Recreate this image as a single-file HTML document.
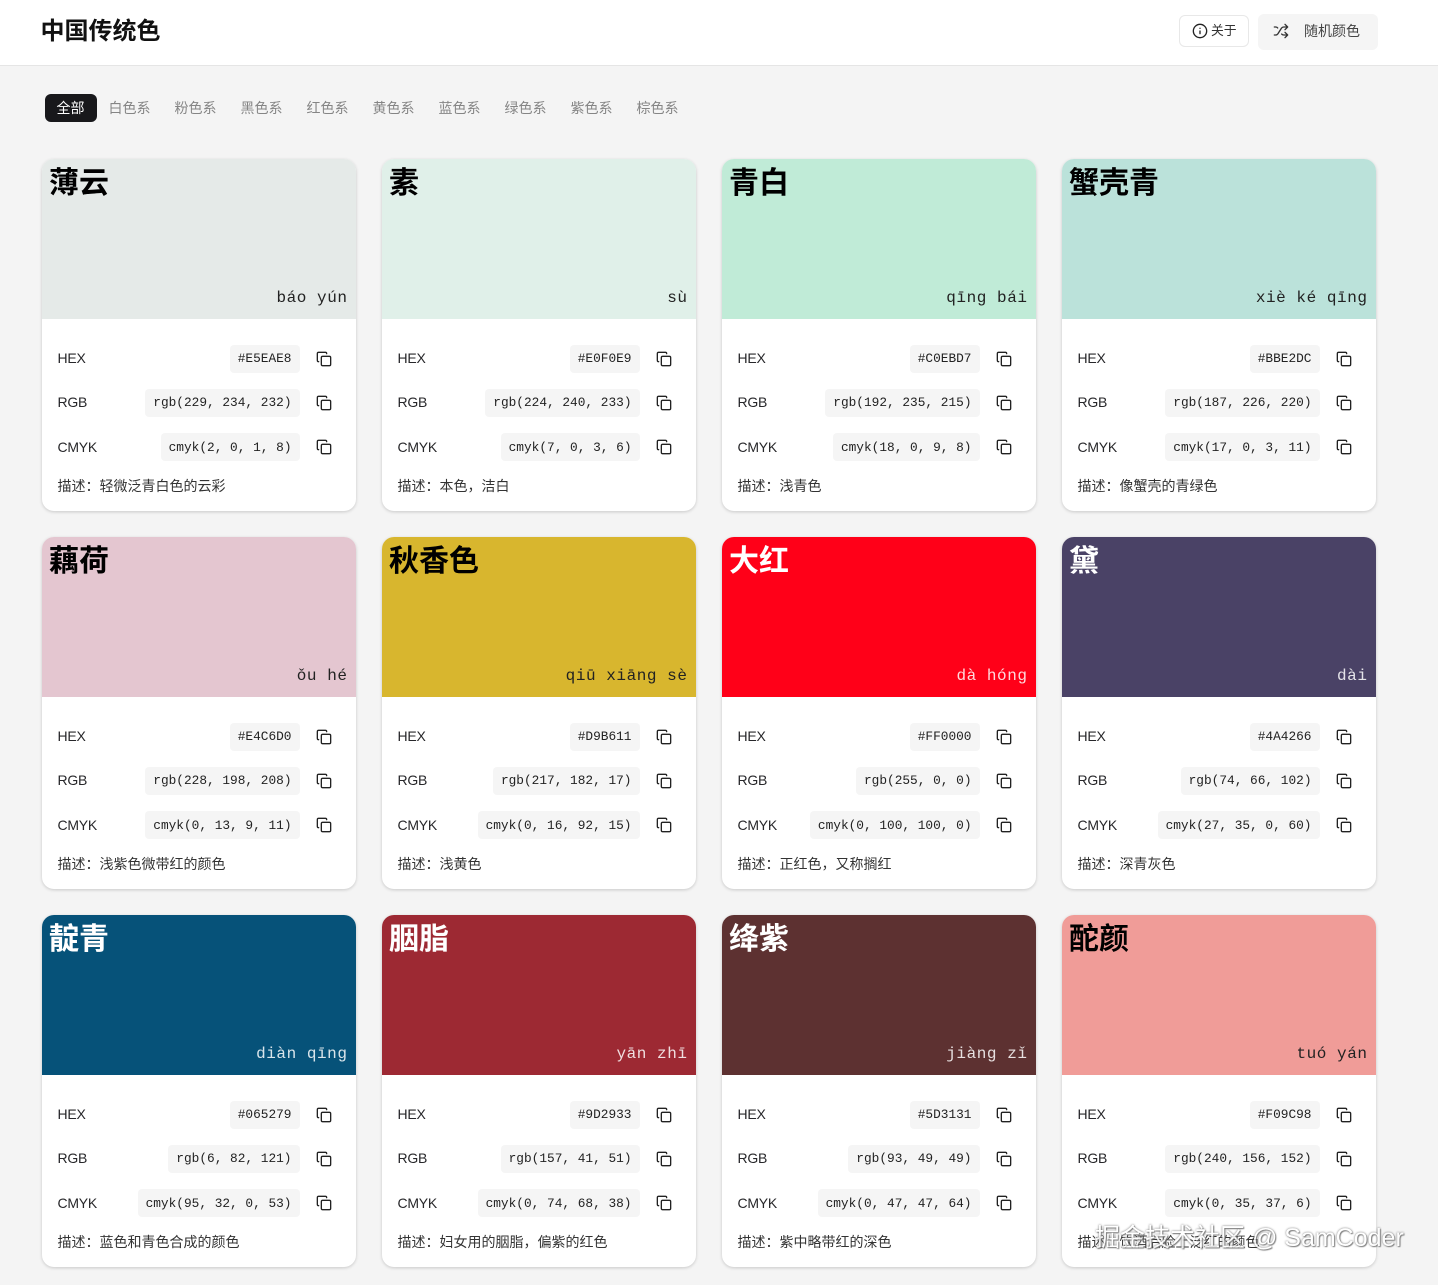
<!DOCTYPE html>
<html lang="zh"><head><meta charset="utf-8"><title>中国传统色</title>
<style>
*{box-sizing:border-box}
html,body{margin:0;padding:0}
body{width:1438px;height:1285px;position:relative;overflow:hidden;background:#f4f4f4;font-family:"Liberation Sans","Noto Sans CJK SC",sans-serif;color:#18181b}
header{position:absolute;left:0;top:0;width:1438px;height:66px;background:#fff;border-bottom:1px solid #e5e5e5}
h1{position:absolute;left:40.5px;top:14px;margin:0;font-size:24px;line-height:36px;font-weight:700;color:#111}
.about{position:absolute;left:1179px;top:15px;width:70px;height:32px;border:1px solid #e8e8e8;border-radius:6px;background:#fff;font-size:12.8px;line-height:30px;color:#333;padding-left:31px}
.about svg{position:absolute;left:12px;top:7px}
.rand{position:absolute;left:1258px;top:14px;width:120px;height:36px;border-radius:6px;background:#f5f5f5;font-size:14px;line-height:34px;color:#444;padding-left:46px}
.rand svg{position:absolute;left:15px;top:9px}
nav{position:absolute;left:44.5px;top:94px;display:flex;height:28px;font-size:14px;line-height:28px;color:#858585}
nav span{padding:0 12px;white-space:nowrap}
nav .on{background:#18181b;color:#fff;border-radius:6px;font-size:14px}
.c{position:absolute;width:314px;height:352px;background:#fff;border-radius:12px;overflow:hidden;box-shadow:0 1px 3px rgba(0,0,0,.18)}
.b{position:absolute;left:0;top:0;width:314px;height:160px}
.n{position:absolute;left:7px;top:2px;font-size:30px;line-height:45px;font-weight:700;color:#000;white-space:nowrap}
.p{position:absolute;right:8.5px;top:128px;font-family:"Liberation Mono","DejaVu Sans Mono",monospace;font-size:16px;letter-spacing:.55px;line-height:22px;color:#222;white-space:pre}
.w .n{color:#fff}.w .p{color:rgba(255,255,255,.85)}
.l{position:absolute;left:15.5px;font-size:14px;line-height:20px;color:#27272a;letter-spacing:-.25px}
.v{position:absolute;right:56px;height:28px;padding:0 8.5px 0 8px;background:#f5f5f5;border-radius:4px;font-family:"Liberation Mono","DejaVu Sans Mono",monospace;font-size:12.8px;line-height:28px;color:#222;white-space:pre}
.i{position:absolute;left:274px;width:16px;height:16px}
.r1.l{top:189px}.r2.l{top:233px}.r3.l{top:278px}
.r1.v{top:186px}.r2.v{top:230px}.r3.v{top:274px;line-height:30px}
.r1.i{top:192px}.r2.i{top:236px}.r3.i{top:280px}
.d{position:absolute;left:15.5px;top:317px;font-size:14px;line-height:20px;color:#333;white-space:nowrap}
.wm{position:absolute;left:1095px;top:1220px;font-size:25px;line-height:36px;color:#fff;white-space:nowrap;text-shadow:0 0 2px #555,1px 1px 1px #777;opacity:.85}
</style></head><body>
<svg width="0" height="0" style="position:absolute"><defs><symbol id="cp" viewBox="0 0 24 24" fill="none" stroke="#222" stroke-width="2" stroke-linecap="round" stroke-linejoin="round"><rect x="8" y="8" width="14" height="14" rx="2"/><path d="M4 16c-1.1 0-2-.9-2-2V4c0-1.1.9-2 2-2h10c1.1 0 2 .9 2 2"/></symbol></defs></svg>
<header>
<h1>中国传统色</h1>
<div class="about"><svg width="16" height="16" viewBox="0 0 24 24" fill="none" stroke="#222" stroke-width="2" stroke-linecap="round"><circle cx="12" cy="12" r="10"/><path d="M12 16v-4M12 8h.01"/></svg>关于</div>
<div class="rand"><svg width="16" height="16" viewBox="0 0 24 24" fill="none" stroke="#333" stroke-width="2" stroke-linecap="round" stroke-linejoin="round"><path d="m18 14 4 4-4 4M18 2l4 4-4 4M2 18h1.97a4 4 0 0 0 3.3-1.7l5.46-8.6a4 4 0 0 1 3.3-1.7H22M2 6h1.97a4 4 0 0 1 3.05 1.4M22 18h-5.95a4 4 0 0 1-3.05-1.4"/></svg>随机颜色</div>
</header>
<nav><span class="on">全部</span><span>白色系</span><span>粉色系</span><span>黑色系</span><span>红色系</span><span>黄色系</span><span>蓝色系</span><span>绿色系</span><span>紫色系</span><span>棕色系</span></nav>

<div class="c" style="left:42px;top:159px"><div class="b" style="background:#E5EAE8"><div class="n">薄云</div><div class="p">báo yún</div></div>
<div class="l r1">HEX</div><div class="v r1">#E5EAE8</div><svg class="i r1"><use href="#cp"/></svg>
<div class="l r2">RGB</div><div class="v r2">rgb(229, 234, 232)</div><svg class="i r2"><use href="#cp"/></svg>
<div class="l r3">CMYK</div><div class="v r3">cmyk(2, 0, 1, 8)</div><svg class="i r3"><use href="#cp"/></svg>
<div class="d">描述：轻微泛青白色的云彩</div></div>

<div class="c" style="left:382px;top:159px"><div class="b" style="background:#E0F0E9"><div class="n">素</div><div class="p">sù</div></div>
<div class="l r1">HEX</div><div class="v r1">#E0F0E9</div><svg class="i r1"><use href="#cp"/></svg>
<div class="l r2">RGB</div><div class="v r2">rgb(224, 240, 233)</div><svg class="i r2"><use href="#cp"/></svg>
<div class="l r3">CMYK</div><div class="v r3">cmyk(7, 0, 3, 6)</div><svg class="i r3"><use href="#cp"/></svg>
<div class="d">描述：本色，洁白</div></div>

<div class="c" style="left:722px;top:159px"><div class="b" style="background:#C0EBD7"><div class="n">青白</div><div class="p">qīng bái</div></div>
<div class="l r1">HEX</div><div class="v r1">#C0EBD7</div><svg class="i r1"><use href="#cp"/></svg>
<div class="l r2">RGB</div><div class="v r2">rgb(192, 235, 215)</div><svg class="i r2"><use href="#cp"/></svg>
<div class="l r3">CMYK</div><div class="v r3">cmyk(18, 0, 9, 8)</div><svg class="i r3"><use href="#cp"/></svg>
<div class="d">描述：浅青色</div></div>

<div class="c" style="left:1062px;top:159px"><div class="b" style="background:#BBE2DA"><div class="n">蟹壳青</div><div class="p">xiè ké qīng</div></div>
<div class="l r1">HEX</div><div class="v r1">#BBE2DC</div><svg class="i r1"><use href="#cp"/></svg>
<div class="l r2">RGB</div><div class="v r2">rgb(187, 226, 220)</div><svg class="i r2"><use href="#cp"/></svg>
<div class="l r3">CMYK</div><div class="v r3">cmyk(17, 0, 3, 11)</div><svg class="i r3"><use href="#cp"/></svg>
<div class="d">描述：像蟹壳的青绿色</div></div>

<div class="c" style="left:42px;top:537px"><div class="b" style="background:#E4C6D0"><div class="n">藕荷</div><div class="p">ǒu hé</div></div>
<div class="l r1">HEX</div><div class="v r1">#E4C6D0</div><svg class="i r1"><use href="#cp"/></svg>
<div class="l r2">RGB</div><div class="v r2">rgb(228, 198, 208)</div><svg class="i r2"><use href="#cp"/></svg>
<div class="l r3">CMYK</div><div class="v r3">cmyk(0, 13, 9, 11)</div><svg class="i r3"><use href="#cp"/></svg>
<div class="d">描述：浅紫色微带红的颜色</div></div>

<div class="c" style="left:382px;top:537px"><div class="b" style="background:#D8B62E"><div class="n">秋香色</div><div class="p">qiū xiāng sè</div></div>
<div class="l r1">HEX</div><div class="v r1">#D9B611</div><svg class="i r1"><use href="#cp"/></svg>
<div class="l r2">RGB</div><div class="v r2">rgb(217, 182, 17)</div><svg class="i r2"><use href="#cp"/></svg>
<div class="l r3">CMYK</div><div class="v r3">cmyk(0, 16, 92, 15)</div><svg class="i r3"><use href="#cp"/></svg>
<div class="d">描述：浅黄色</div></div>

<div class="c w" style="left:722px;top:537px"><div class="b" style="background:#FF0018"><div class="n">大红</div><div class="p">dà hóng</div></div>
<div class="l r1">HEX</div><div class="v r1">#FF0000</div><svg class="i r1"><use href="#cp"/></svg>
<div class="l r2">RGB</div><div class="v r2">rgb(255, 0, 0)</div><svg class="i r2"><use href="#cp"/></svg>
<div class="l r3">CMYK</div><div class="v r3">cmyk(0, 100, 100, 0)</div><svg class="i r3"><use href="#cp"/></svg>
<div class="d">描述：正红色，又称搁红</div></div>

<div class="c w" style="left:1062px;top:537px"><div class="b" style="background:#4A4266"><div class="n">黛</div><div class="p">dài</div></div>
<div class="l r1">HEX</div><div class="v r1">#4A4266</div><svg class="i r1"><use href="#cp"/></svg>
<div class="l r2">RGB</div><div class="v r2">rgb(74, 66, 102)</div><svg class="i r2"><use href="#cp"/></svg>
<div class="l r3">CMYK</div><div class="v r3">cmyk(27, 35, 0, 60)</div><svg class="i r3"><use href="#cp"/></svg>
<div class="d">描述：深青灰色</div></div>

<div class="c w" style="left:42px;top:915px"><div class="b" style="background:#065279"><div class="n">靛青</div><div class="p">diàn qīng</div></div>
<div class="l r1">HEX</div><div class="v r1">#065279</div><svg class="i r1"><use href="#cp"/></svg>
<div class="l r2">RGB</div><div class="v r2">rgb(6, 82, 121)</div><svg class="i r2"><use href="#cp"/></svg>
<div class="l r3">CMYK</div><div class="v r3">cmyk(95, 32, 0, 53)</div><svg class="i r3"><use href="#cp"/></svg>
<div class="d">描述：蓝色和青色合成的颜色</div></div>

<div class="c w" style="left:382px;top:915px"><div class="b" style="background:#9D2933"><div class="n">胭脂</div><div class="p">yān zhī</div></div>
<div class="l r1">HEX</div><div class="v r1">#9D2933</div><svg class="i r1"><use href="#cp"/></svg>
<div class="l r2">RGB</div><div class="v r2">rgb(157, 41, 51)</div><svg class="i r2"><use href="#cp"/></svg>
<div class="l r3">CMYK</div><div class="v r3">cmyk(0, 74, 68, 38)</div><svg class="i r3"><use href="#cp"/></svg>
<div class="d">描述：妇女用的胭脂，偏紫的红色</div></div>

<div class="c w" style="left:722px;top:915px"><div class="b" style="background:#5D3131"><div class="n">绛紫</div><div class="p">jiàng zǐ</div></div>
<div class="l r1">HEX</div><div class="v r1">#5D3131</div><svg class="i r1"><use href="#cp"/></svg>
<div class="l r2">RGB</div><div class="v r2">rgb(93, 49, 49)</div><svg class="i r2"><use href="#cp"/></svg>
<div class="l r3">CMYK</div><div class="v r3">cmyk(0, 47, 47, 64)</div><svg class="i r3"><use href="#cp"/></svg>
<div class="d">描述：紫中略带红的深色</div></div>

<div class="c" style="left:1062px;top:915px"><div class="b" style="background:#F09C98"><div class="n">酡颜</div><div class="p">tuó yán</div></div>
<div class="l r1">HEX</div><div class="v r1">#F09C98</div><svg class="i r1"><use href="#cp"/></svg>
<div class="l r2">RGB</div><div class="v r2">rgb(240, 156, 152)</div><svg class="i r2"><use href="#cp"/></svg>
<div class="l r3">CMYK</div><div class="v r3">cmyk(0, 35, 37, 6)</div><svg class="i r3"><use href="#cp"/></svg>
<div class="d">描述：饮酒后脸上泛红的颜色</div></div>

<div class="wm">掘金技术社区 @ SamCoder</div>
</body></html>
